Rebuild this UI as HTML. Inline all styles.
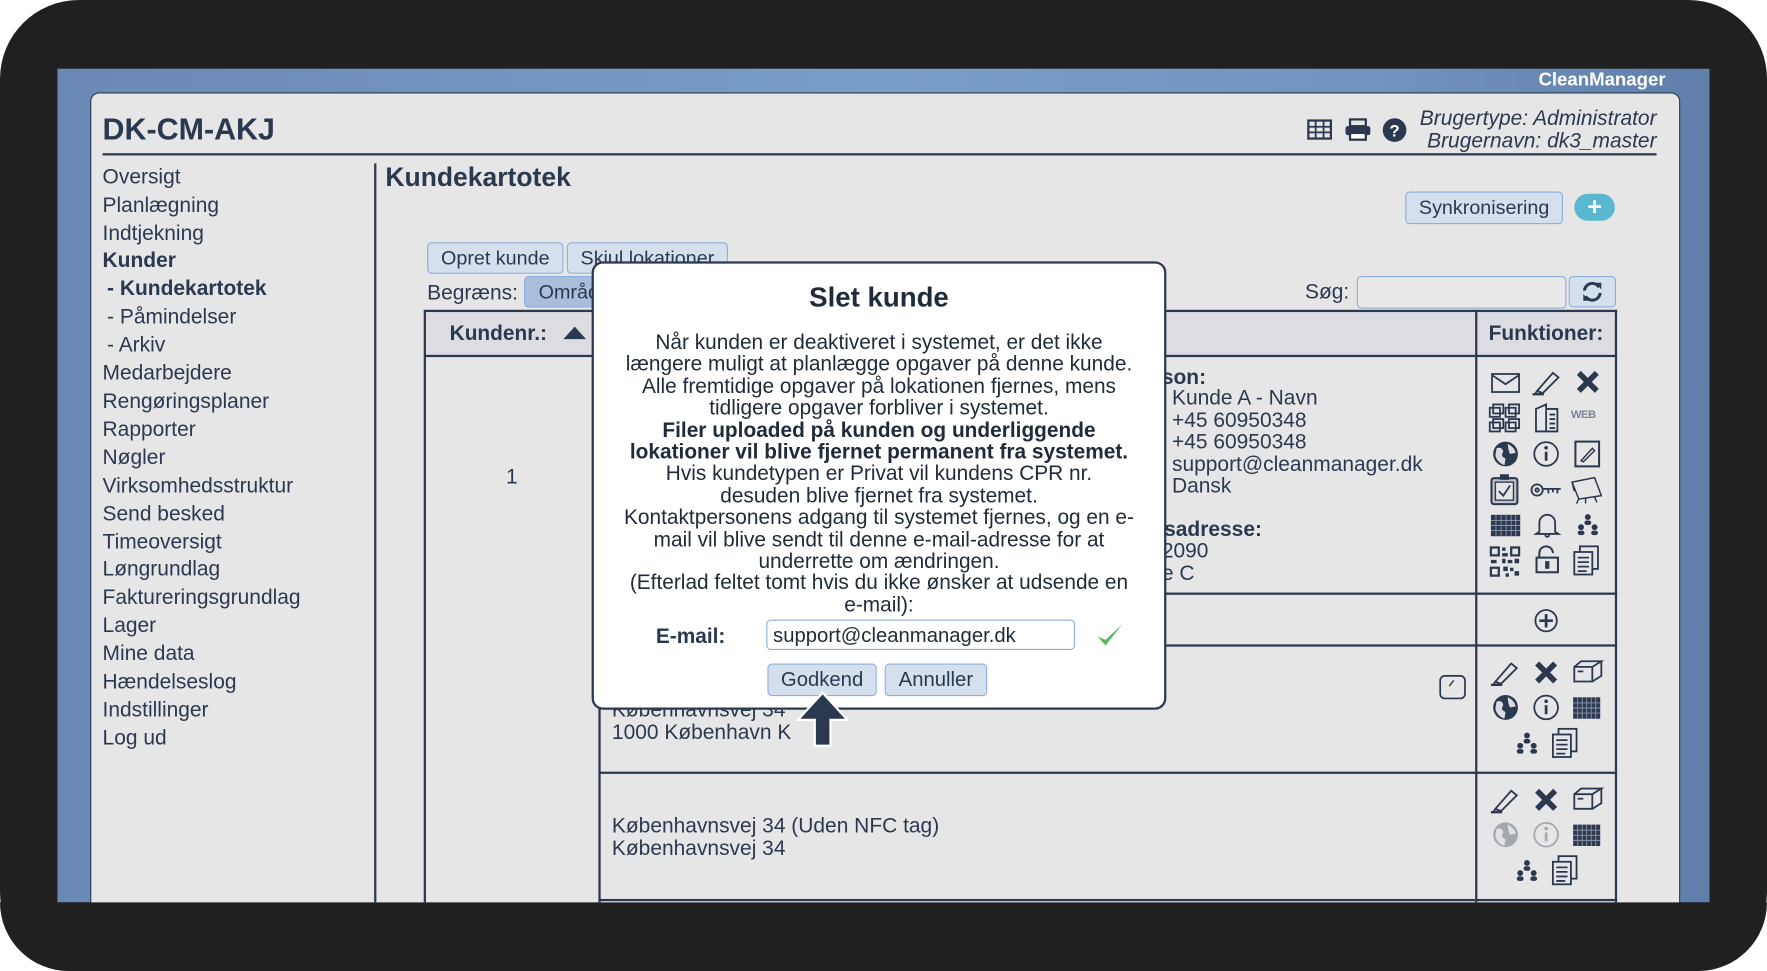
<!DOCTYPE html>
<html><head><meta charset="utf-8"><style>
html,body{margin:0;padding:0;background:#fff;width:1767px;height:971px;overflow:hidden}
#st{position:absolute;left:0;top:0;width:1568px;height:862px;transform:scale(1.12691,1.1265);transform-origin:0 0;font-family:"Liberation Sans",Arial,sans-serif;color:#2b3950}
.a{position:absolute;white-space:nowrap}
.frame{left:0;top:0;width:1568px;height:862px;background:#212021;border-radius:70px}
.scr{left:51px;top:61px;width:1466px;height:740px;background:linear-gradient(90deg,#6a88b4,#7a9fc6 50%,#7293be 80%,#5f7faa)}
.panel{left:80px;top:82px;width:1409px;height:730px;background:#e6e6e6;border:1px solid #2b3950;border-radius:8px 8px 0 0}
.nav{left:91px;font-size:18.6px;line-height:20px}
.btn{position:absolute;background:#d5e0ee;border:1px solid #8fb0dc;border-radius:4px;font-size:17.5px;text-align:center;box-sizing:border-box;color:#2b3950}
.hl{position:absolute;height:2px;background:#2b3950}
.vl{position:absolute;width:2px;background:#2b3950}
.t{font-size:18.6px}
.dlg{left:525px;top:232px;width:506px;height:394px;background:#fff;border:2px solid #2b3950;border-radius:10px}
.dt{position:absolute;left:0;width:506px;text-align:center;font-size:18.5px;color:#1f2a3a}
svg{position:absolute;overflow:visible}
</style></head><body><div id="st">
<div class="a frame"></div>
<div class="a scr"></div>
<div class="a" style="right:90px;top:62px;color:#fff;font-weight:bold;font-size:16.5px">CleanManager</div>
<div class="a panel"></div>
<div class="a" style="left:91px;top:100px;font-size:27px;font-weight:bold">DK-CM-AKJ</div>
<div class="hl" style="left:91px;top:136px;width:1379px"></div>
<div class="a" style="right:98px;top:95px;font-size:18.6px;font-style:italic;text-align:right;line-height:20px">Brugertype: Administrator<br>Brugernavn: dk3_master</div>
<svg style="left:1160px;top:106px" width="22" height="18"><rect x="1" y="1" width="20" height="16" fill="none" stroke="#2b3950" stroke-width="2"/><path d="M1 6.5H21M1 11.5H21M7.5 1V17M14.5 1V17" stroke="#2b3950" stroke-width="1.6"/></svg>
<svg style="left:1193px;top:105px" width="24" height="20"><rect x="5" y="1" width="14" height="6" fill="none" stroke="#2b3950" stroke-width="2"/><rect x="1" y="7" width="22" height="8" rx="2" fill="#2b3950"/><rect x="5" y="13" width="14" height="6" fill="#fff" stroke="#2b3950" stroke-width="2"/></svg>
<svg style="left:1227px;top:105px" width="21" height="21"><circle cx="10.5" cy="10.5" r="10.5" fill="#2b3950"/><text x="10.5" y="16" text-anchor="middle" fill="#fff" font-size="15" font-weight="bold" font-family="Liberation Sans">?</text></svg>

<div class="a nav" style="top:147px">Oversigt</div>
<div class="a nav" style="top:172px">Planlægning</div>
<div class="a nav" style="top:197px">Indtjekning</div>
<div class="a nav" style="top:221px;font-weight:bold">Kunder</div>
<div class="a nav" style="top:246px;left:95px;font-weight:bold">- Kundekartotek</div>
<div class="a nav" style="top:271px;left:95px">- Påmindelser</div>
<div class="a nav" style="top:296px;left:95px">- Arkiv</div>
<div class="a nav" style="top:321px">Medarbejdere</div>
<div class="a nav" style="top:346px">Rengøringsplaner</div>
<div class="a nav" style="top:371px">Rapporter</div>
<div class="a nav" style="top:396px">Nøgler</div>
<div class="a nav" style="top:421px">Virksomhedsstruktur</div>
<div class="a nav" style="top:446px">Send besked</div>
<div class="a nav" style="top:471px">Timeoversigt</div>
<div class="a nav" style="top:495px">Løngrundlag</div>
<div class="a nav" style="top:520px">Faktureringsgrundlag</div>
<div class="a nav" style="top:545px">Lager</div>
<div class="a nav" style="top:570px">Mine data</div>
<div class="a nav" style="top:595px">Hændelseslog</div>
<div class="a nav" style="top:620px">Indstillinger</div>
<div class="a nav" style="top:645px">Log ud</div>
<div class="vl" style="left:332px;top:145px;height:656px;width:1.5px"></div>

<div class="a" style="left:342px;top:144px;font-size:23.5px;font-weight:bold">Kundekartotek</div>
<div class="btn" style="left:1247px;top:170px;width:140px;height:29px;line-height:27px">Synkronisering</div>
<div class="a" style="left:1397px;top:172px;width:36px;height:24px;border-radius:12px;background:#5bb7cf;color:#fff;font-weight:bold;font-size:22px;text-align:center;line-height:24px">+</div>
<div class="btn" style="left:379px;top:215px;width:121px;height:28px;line-height:26px">Opret kunde</div>
<div class="btn" style="left:503px;top:215px;width:143px;height:28px;line-height:26px">Skjul lokationer</div>
<div class="a t" style="left:379px;top:249px">Begræns:</div>
<div class="btn" style="left:465px;top:245px;width:80px;height:28px;line-height:26px;background:#a9bedb;text-align:left;padding-left:12px">Område</div>
<div class="a t" style="left:1158px;top:248px">Søg:</div>
<div class="a" style="left:1204px;top:245px;width:184px;height:27px;border:1px solid #8fb0dc;border-radius:4px;background:#e8e8e8"></div>
<div class="btn" style="left:1392px;top:245px;width:42px;height:28px"></div>
<svg style="left:1403px;top:250px" width="20" height="18" viewBox="0 0 20 18"><path d="M3 8A7 7 0 0 1 16 5M17 10A7 7 0 0 1 4 13" fill="none" stroke="#2b3950" stroke-width="2.6"/><path d="M13 1L18 1L18 7Z M7 17L2 17L2 11Z" fill="#2b3950"/></svg>

<!-- table -->
<div class="a" style="left:377px;top:276px;width:1057px;height:40px;background:#dcdce1"></div>
<div class="hl" style="left:377px;top:275px;width:1058px"></div>
<div class="hl" style="left:377px;top:315px;width:1058px"></div>
<div class="vl" style="left:376px;top:275px;height:526px"></div>
<div class="vl" style="left:531px;top:275px;height:526px"></div>
<div class="vl" style="left:1309px;top:275px;height:526px"></div>
<div class="vl" style="left:1433px;top:275px;height:526px"></div>
<div class="hl" style="left:532px;top:526px;width:903px"></div>
<div class="hl" style="left:532px;top:572px;width:903px"></div>
<div class="hl" style="left:532px;top:685px;width:903px"></div>
<div class="hl" style="left:532px;top:798px;width:903px"></div>
<div class="a" style="left:399px;top:285px;font-size:18.5px;font-weight:bold">Kundenr.:</div>
<svg style="left:500px;top:289px" width="20" height="12"><path d="M0 12L10 1L20 12Z" fill="#2b3950"/></svg>
<div class="a" style="left:1321px;top:285px;font-size:18.5px;font-weight:bold">Funktioner:</div>
<div class="a t" style="left:449px;top:412px">1</div>
<div class="a t" style="left:1031px;top:324px;font-weight:bold">son:</div>
<div class="a t" style="left:1040px;top:343px;line-height:19.5px">Kunde A - Navn<br>+45 60950348<br>+45 60950348<br>support@cleanmanager.dk<br>Dansk</div>
<div class="a t" style="left:1033px;top:459px;font-weight:bold">sadresse:</div>
<div class="a t" style="left:1031px;top:479px;line-height:19.5px">2090<br>e C</div>
<div class="a t" style="left:543px;top:620px;line-height:19.5px">Københavnsvej 34<br>1000 København K</div>
<div class="a t" style="left:543px;top:723px;line-height:19.5px">Københavnsvej 34 (Uden NFC tag)<br>Københavnsvej 34</div>
<svg style="left:1277px;top:599px" width="24" height="22"><rect x="1" y="1" width="22" height="20" rx="4" fill="none" stroke="#2b3950" stroke-width="1.5"/><path d="M9 10L13 5" stroke="#2b3950" stroke-width="1.3"/></svg>
<svg style="left:1361px;top:540px" width="22" height="22"><circle cx="11" cy="11" r="9.5" fill="none" stroke="#2b3950" stroke-width="1.6"/><path d="M11 5V17M5 11H17" stroke="#2b3950" stroke-width="2.4"/></svg>

<!-- icon grid row 1 -->
<svg style="left:1323px;top:331px" width="26" height="18"><rect x="1" y="1" width="24" height="16" fill="none" stroke="#2b3950" stroke-width="1.6"/><path d="M1 2L13 10L25 2" fill="none" stroke="#2b3950" stroke-width="1.6"/></svg>
<svg style="left:1360px;top:327px" width="26" height="24"><path d="M4 20L18 4L23 8L9 22Z M4 20L2 23L9 22" fill="none" stroke="#2b3950" stroke-width="1.6"/><path d="M0 23H10" stroke="#2b3950" stroke-width="2"/></svg>
<svg style="left:1398px;top:329px" width="22" height="20"><path d="M3 2L19 18M19 2L3 18" stroke="#2b3950" stroke-width="5"/></svg>
<svg style="left:1321px;top:358px" width="28" height="26" fill="none" stroke="#2b3950" stroke-width="1.6"><rect x="1" y="4" width="9" height="8"/><rect x="4" y="1" width="9" height="8"/><rect x="15" y="4" width="9" height="8"/><rect x="18" y="1" width="9" height="8"/><rect x="1" y="17" width="9" height="8"/><rect x="4" y="14" width="9" height="8"/><rect x="15" y="17" width="9" height="8"/><rect x="18" y="14" width="9" height="8"/></svg>
<svg style="left:1362px;top:358px" width="22" height="26" fill="none" stroke="#2b3950" stroke-width="1.6"><path d="M1 5L10 1V25H1Z"/><path d="M10 5H20V25H10"/><path d="M13 10H18M13 14H18M13 18H18M13 22H18"/></svg>
<div class="a" style="left:1394px;top:363px;font-size:10px;font-weight:bold;color:#7a8597;letter-spacing:-.5px">WEB</div>
<svg style="left:1324px;top:391px" width="24" height="24"><circle cx="12" cy="12" r="11" fill="#2b3950"/><path d="M4 7Q9 5 10 10Q7 14 12 16L11 22Q4 19 3 13Z M14 3Q20 6 21 11L16 12Q14 8 14 3Z" fill="#dcdce0"/></svg>
<svg style="left:1360px;top:391px" width="24" height="24"><circle cx="12" cy="12" r="10.5" fill="none" stroke="#2b3950" stroke-width="1.6"/><path d="M12 10V18" stroke="#2b3950" stroke-width="2.4"/><circle cx="12" cy="6.5" r="1.6" fill="#2b3950"/></svg>
<svg style="left:1396px;top:391px" width="24" height="24"><rect x="2" y="1" width="21" height="22" fill="none" stroke="#2b3950" stroke-width="1.8"/><path d="M7 18L17 7L19 9L9 19Z" fill="none" stroke="#2b3950" stroke-width="1.3"/></svg>
<svg style="left:1322px;top:421px" width="26" height="28"><rect x="1.5" y="3.5" width="23" height="23" rx="2" fill="#bfc3cb" stroke="#2b3950" stroke-width="1.8"/><rect x="5" y="7" width="16" height="16" fill="#e6e6e6" stroke="#2b3950" stroke-width="1.2"/><rect x="9" y="0" width="8" height="5" fill="#2b3950"/><path d="M8 15L12 19L18 10" fill="none" stroke="#2b3950" stroke-width="1.6"/></svg>
<svg style="left:1358px;top:428px" width="28" height="14" fill="none" stroke="#2b3950" stroke-width="1.6"><circle cx="6" cy="7" r="5"/><circle cx="6" cy="7" r="1.5"/><path d="M11 6H27M16 6V10M20 6V9M24 6V10"/></svg>
<svg style="left:1393px;top:422px" width="30" height="26" fill="none" stroke="#2b3950" stroke-width="1.3"><path d="M2 6L22 2L28 18L8 21Z"/><path d="M8 21L6 25M14 20L14 25M22 19L24 24M2 6L4 14"/></svg>
<svg style="left:1323px;top:457px" width="26" height="19"><rect x="0" y="0" width="26" height="19" fill="#2b3950"/><path d="M0 5H26M0 9.5H26M0 14H26M4.5 0V19M9 0V19M13.5 0V19M18 0V19M22 0V19" stroke="#8d96a6" stroke-width="0.8"/></svg>
<svg style="left:1361px;top:454px" width="24" height="24" fill="none" stroke="#2b3950" stroke-width="1.6"><path d="M5 18V10A7 7 0 0 1 19 10V18L22 20H2L5 18Z"/><path d="M10 21Q12 24 14 21"/></svg>
<svg style="left:1398px;top:456px" width="22" height="20" fill="#2b3950"><circle cx="11" cy="3" r="2.6"/><rect x="8" y="6" width="6" height="4" rx="2"/><circle cx="5" cy="12" r="2.6"/><rect x="2" y="15" width="6" height="4" rx="2"/><circle cx="17" cy="12" r="2.6"/><rect x="14" y="15" width="6" height="4" rx="2"/></svg>
<svg style="left:1322px;top:485px" width="27" height="27" fill="#2b3950"><rect x="0" y="0" width="9" height="9"/><rect x="2" y="2" width="5" height="5" fill="#e6e6e6"/><rect x="18" y="0" width="9" height="9"/><rect x="20" y="2" width="5" height="5" fill="#e6e6e6"/><rect x="0" y="18" width="9" height="9"/><rect x="2" y="20" width="5" height="5" fill="#e6e6e6"/><rect x="11" y="1" width="3" height="3"/><rect x="11" y="6" width="5" height="3"/><rect x="11" y="11" width="3" height="4"/><rect x="16" y="12" width="4" height="3"/><rect x="22" y="11" width="4" height="4"/><rect x="1" y="12" width="5" height="3"/><rect x="12" y="18" width="4" height="4"/><rect x="18" y="19" width="3" height="3"/><rect x="22" y="22" width="4" height="4"/><rect x="14" y="24" width="3" height="3"/></svg>
<svg style="left:1362px;top:484px" width="22" height="26" fill="none" stroke="#2b3950" stroke-width="1.8"><path d="M4 11V7A6 6 0 0 1 16 7"/><rect x="1.5" y="11" width="19" height="13"/><rect x="10" y="15" width="2" height="5" fill="#2b3950"/></svg>
<svg style="left:1396px;top:484px" width="24" height="27" fill="none" stroke="#2b3950" stroke-width="1.6"><rect x="6" y="1" width="16" height="20"/><rect x="1" y="6" width="16" height="20" fill="#e6e6e6"/><path d="M4 11H14M4 15H14M4 19H14M4 23H12"/></svg>

<!-- row 3 icons -->
<svg style="left:1323px;top:585px" width="26" height="24"><path d="M4 20L18 4L23 8L9 22Z M4 20L2 23L9 22" fill="none" stroke="#2b3950" stroke-width="1.6"/><path d="M0 23H10" stroke="#2b3950" stroke-width="2"/></svg>
<svg style="left:1361px;top:587px" width="22" height="20"><path d="M3 2L19 18M19 2L3 18" stroke="#2b3950" stroke-width="5"/></svg>
<svg style="left:1396px;top:586px" width="26" height="20" fill="none" stroke="#2b3950" stroke-width="1.6"><path d="M1 6H17V19H1Z M1 6L7 1H25L17 6 M25 1V14L17 19"/><path d="M4 10H9"/></svg>
<svg style="left:1324px;top:616px" width="24" height="24"><circle cx="12" cy="12" r="11" fill="#2b3950"/><path d="M4 7Q9 5 10 10Q7 14 12 16L11 22Q4 19 3 13Z M14 3Q20 6 21 11L16 12Q14 8 14 3Z" fill="#dcdce0"/></svg>
<svg style="left:1360px;top:616px" width="24" height="24"><circle cx="12" cy="12" r="10.5" fill="none" stroke="#2b3950" stroke-width="1.6"/><path d="M12 10V18" stroke="#2b3950" stroke-width="2.4"/><circle cx="12" cy="6.5" r="1.6" fill="#2b3950"/></svg>
<svg style="left:1396px;top:619px" width="24" height="19"><rect x="0" y="0" width="24" height="19" fill="#2b3950"/><path d="M0 5H24M0 9.5H24M0 14H24M4 0V19M8 0V19M12 0V19M16 0V19M20 0V19" stroke="#8d96a6" stroke-width="0.8"/></svg>
<svg style="left:1344px;top:650px" width="22" height="20" fill="#2b3950"><circle cx="11" cy="3" r="2.6"/><rect x="8" y="6" width="6" height="4" rx="2"/><circle cx="5" cy="12" r="2.6"/><rect x="2" y="15" width="6" height="4" rx="2"/><circle cx="17" cy="12" r="2.6"/><rect x="14" y="15" width="6" height="4" rx="2"/></svg>
<svg style="left:1377px;top:646px" width="24" height="27" fill="none" stroke="#2b3950" stroke-width="1.6"><rect x="6" y="1" width="16" height="20"/><rect x="1" y="6" width="16" height="20" fill="#e6e6e6"/><path d="M4 11H14M4 15H14M4 19H14M4 23H12"/></svg>
<!-- row 4 icons -->
<svg style="left:1323px;top:698px" width="26" height="24"><path d="M4 20L18 4L23 8L9 22Z M4 20L2 23L9 22" fill="none" stroke="#2b3950" stroke-width="1.6"/><path d="M0 23H10" stroke="#2b3950" stroke-width="2"/></svg>
<svg style="left:1361px;top:700px" width="22" height="20"><path d="M3 2L19 18M19 2L3 18" stroke="#2b3950" stroke-width="5"/></svg>
<svg style="left:1396px;top:699px" width="26" height="20" fill="none" stroke="#2b3950" stroke-width="1.6"><path d="M1 6H17V19H1Z M1 6L7 1H25L17 6 M25 1V14L17 19"/><path d="M4 10H9"/></svg>
<svg style="left:1324px;top:729px" width="24" height="24" opacity="0.35"><circle cx="12" cy="12" r="11" fill="#2b3950"/><path d="M4 7Q9 5 10 10Q7 14 12 16L11 22Q4 19 3 13Z M14 3Q20 6 21 11L16 12Q14 8 14 3Z" fill="#dcdce0"/></svg>
<svg style="left:1360px;top:729px" width="24" height="24" opacity="0.35"><circle cx="12" cy="12" r="10.5" fill="none" stroke="#2b3950" stroke-width="1.6"/><path d="M12 10V18" stroke="#2b3950" stroke-width="2.4"/><circle cx="12" cy="6.5" r="1.6" fill="#2b3950"/></svg>
<svg style="left:1396px;top:732px" width="24" height="19"><rect x="0" y="0" width="24" height="19" fill="#2b3950"/><path d="M0 5H24M0 9.5H24M0 14H24M4 0V19M8 0V19M12 0V19M16 0V19M20 0V19" stroke="#8d96a6" stroke-width="0.8"/></svg>
<svg style="left:1344px;top:763px" width="22" height="20" fill="#2b3950"><circle cx="11" cy="3" r="2.6"/><rect x="8" y="6" width="6" height="4" rx="2"/><circle cx="5" cy="12" r="2.6"/><rect x="2" y="15" width="6" height="4" rx="2"/><circle cx="17" cy="12" r="2.6"/><rect x="14" y="15" width="6" height="4" rx="2"/></svg>
<svg style="left:1377px;top:759px" width="24" height="27" fill="none" stroke="#2b3950" stroke-width="1.6"><rect x="6" y="1" width="16" height="20"/><rect x="1" y="6" width="16" height="20" fill="#e6e6e6"/><path d="M4 11H14M4 15H14M4 19H14M4 23H12"/></svg>

<!-- black bottom band -->
<div class="a" style="left:0;top:801px;width:1568px;height:61px;background:#212021;border-radius:0 0 70px 70px"></div>

<!-- dialog -->
<div class="a dlg">
<div class="dt" style="top:17px;font-size:24.5px;font-weight:bold">Slet kunde</div>
<div class="dt" style="top:60px;line-height:19.4px">Når kunden er deaktiveret i systemet, er det ikke<br>længere muligt at planlægge opgaver på denne kunde.<br>Alle fremtidige opgaver på lokationen fjernes, mens<br>tidligere opgaver forbliver i systemet.<br><b>Filer uploaded på kunden og underliggende<br>lokationer vil blive fjernet permanent fra systemet.</b><br>Hvis kundetypen er Privat vil kundens CPR nr.<br>desuden blive fjernet fra systemet.<br>Kontaktpersonens adgang til systemet fjernes, og en e-<br>mail vil blive sendt til denne e-mail-adresse for at<br>underrette om ændringen.<br>(Efterlad feltet tomt hvis du ikke ønsker at udsende en<br>e-mail):</div>
<div class="a" style="left:55px;top:320px;font-size:18.5px;font-weight:bold">E-mail:</div>
<div class="a" style="left:153px;top:316px;width:274px;height:27px;border:1px solid #8fb0dc;border-radius:4px;font-size:18px;line-height:27px;padding-left:5px;box-sizing:border-box;color:#1f2a3a">support@cleanmanager.dk</div>
<svg style="left:445px;top:318px" width="26" height="24"><path d="M2 13L9 21L24 2L9 16Z" fill="#5cb85c"/></svg>
<div class="btn" style="left:154px;top:355px;width:97px;height:29px;line-height:27px;font-size:18px">Godkend</div>
<div class="btn" style="left:258px;top:355px;width:91px;height:29px;line-height:27px;font-size:18px">Annuller</div>
</div>
<svg style="left:706px;top:613px" width="50" height="52"><path d="M24 2L46 26H31V49H17V26H2Z" fill="#2b3950" stroke="#fff" stroke-width="2"/></svg>
</div></body></html>
